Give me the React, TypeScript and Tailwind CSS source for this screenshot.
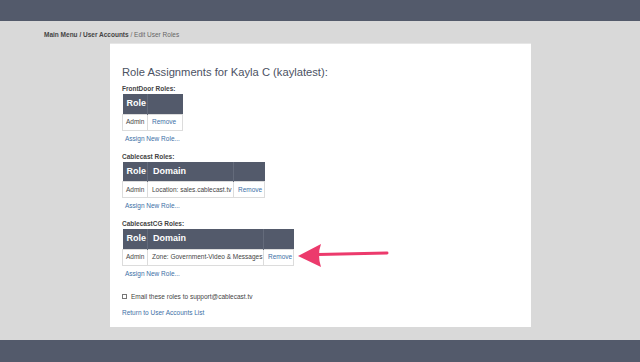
import React from 'react';

type Section = {
  title: string;
  domain?: string;
  widths: number[];
};

const sections: Section[] = [
  { title: 'FrontDoor Roles:', widths: [25, 35] },
  { title: 'Cablecast Roles:', domain: 'Location: sales.cablecast.tv', widths: [25, 86, 31] },
  { title: 'CablecastCG Roles:', domain: 'Zone: Government-Video & Messages', widths: [25, 116, 30] },
];

const RoleTable = ({ section }: { section: Section }) => {
  const total = section.widths.reduce((a, b) => a + b, 0);
  return (
    <table className="table-fixed border-collapse" style={{ width: total }}>
      <colgroup>
        {section.widths.map((w, i) => (
          <col key={i} style={{ width: w }} />
        ))}
      </colgroup>
      <thead>
        <tr className="h-[20px] bg-[#535a6b]">
          <th className="border-r border-[#646b7b] pl-[4px] text-left text-[9px] font-bold text-white">Role</th>
          {section.domain && (
            <th className="border-r border-[#646b7b] pl-[5px] text-left text-[9px] font-bold text-white">Domain</th>
          )}
          <th />
        </tr>
      </thead>
      <tbody>
        <tr className="h-[16px] text-[6.5px]">
          <td className="border border-[#dcdcdc] pl-[3px] text-[#444]">Admin</td>
          {section.domain && (
            <td className="border border-[#dcdcdc] pl-[4px] text-[#444] whitespace-nowrap">{section.domain}</td>
          )}
          <td className="border border-[#dcdcdc] pl-[4px] text-[#3d6fa6]">Remove</td>
        </tr>
      </tbody>
    </table>
  );
};

const App = () => {
  return (
    <div
      className="relative flex h-[362px] w-[640px] flex-col overflow-hidden bg-[#d9d9d9]"
      style={{ fontFamily: '"Liberation Sans", Arial, sans-serif' }}
    >
      <div className="h-[21px] bg-[#535a6b]" />

      <div className="flex-1">
        <div className="pl-[44px] pt-[10px] text-[6.5px] leading-[8px]">
          <span className="font-bold text-[#444]">Main Menu / User Accounts</span>
          <span className="text-[#666]"> / Edit User Roles</span>
        </div>

        <div className="ml-[110px] mt-[5px] h-[283px] w-[421px] bg-white pl-[12px] pt-[21px] shadow-[0_-1px_0_#e6e6e6]">
          <h1 className="text-[11.2px] leading-[14px] text-[#4b5263]">Role Assignments for Kayla C (kaylatest):</h1>

          <div className="mt-[6px] flex flex-col gap-[10px]">
            {sections.map((s) => (
              <div key={s.title}>
                <div className="text-[6.5px] font-bold leading-[8px] text-[#444]">{s.title}</div>
                <div className="mt-[1px]">
                  <RoleTable section={s} />
                </div>
                <div className="mt-[4px] pl-[3px] text-[6.5px] leading-[8px] text-[#3d6fa6]">Assign New Role...</div>
              </div>
            ))}
          </div>

          <label className="mt-[14px] flex h-[10px] items-center gap-[4px] text-[6.5px] text-[#444]">
            <span className="h-[5px] w-[5px] border border-[#777] bg-white" />
            Email these roles to support@cablecast.tv
          </label>

          <div className="mt-[7px] text-[6.5px] leading-[8px] text-[#3d6fa6]">Return to User Accounts List</div>
        </div>
      </div>

      <div className="h-[22px] bg-[#535a6b]" />

      {/* annotation arrow */}
      <svg className="absolute left-[294px] top-[240px]" width="96" height="30" viewBox="0 0 96 30">
        <path d="M24 14.5 L93 13" stroke="#ec3a6c" strokeWidth="3" strokeLinecap="round" />
        <path d="M4 16 L27 4 Q23 15 27 27 Z" fill="#ec3a6c" strokeLinejoin="round" />
      </svg>
    </div>
  );
};

export default App;
